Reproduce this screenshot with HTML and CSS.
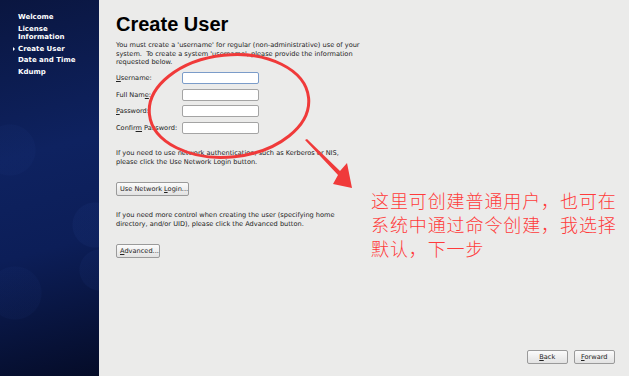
FILE: index.html
```html
<!DOCTYPE html>
<html lang="en">
<head>
    <meta charset="UTF-8">
    <title>Create User</title>
    <link rel="stylesheet" href="styles.css">
</head>
<body>

<div class="screen">
    <!-- Left: installer steps -->
    <aside class="sidebar">
        <ul class="steps">
            <li>Welcome</li>
            <li>License<br>Information</li>
            <li class="current">Create User</li>
            <li>Date and Time</li>
            <li>Kdump</li>
        </ul>
    </aside>

    <!-- Right: create user page -->
    <main class="content">
        <h1>Create User</h1>
        <p>You must create a 'username' for regular (non-administrative) use of your<br>system.&nbsp; To create a system 'username', please provide the information<br>requested below.</p>

        <div class="user-form">
            <label><u>U</u>sername:</label>
            <input type="text" class="focused">
            <label>Full Nam<u>e</u>:</label>
            <input type="text">
            <label><u>P</u>assword:</label>
            <input type="password">
            <label>Confir<u>m</u> Password:</label>
            <input type="password">
        </div>

        <p class="gap">If you need to use network authentication, such as Kerberos or NIS,<br>please click the Use Network Login button.</p>
        <button class="btn gap network">Use Network <u>L</u>ogin...</button>

        <p class="gap">If you need more control when creating the user (specifying home<br>directory, and/or UID), please click the Advanced button.</p>
        <button class="btn gap advanced"><u>A</u>dvanced...</button>

        <div class="nav">
            <button class="btn"><u>B</u>ack</button>
            <button class="btn"><u>F</u>orward</button>
        </div>
    </main>

    <!-- Annotation drawn over the screenshot -->
    <svg class="marks" width="629" height="376" viewBox="0 0 629 376">
        <ellipse cx="229" cy="106" rx="80" ry="51" transform="rotate(-6 229 106)" fill="none" stroke="#f03a3a" stroke-width="3"/>
        <polygon points="305,140 307,139 340,171 347,163 352,188 333,184 338,175" fill="#f03a3a"/>
    </svg>
    <div class="note">这里可创建普通用户，也可在<br>系统中通过命令创建，我选择<br>默认，下一步</div>
</div>

</body>
</html>
```

FILE: styles.css
```css
body {
    margin: 0;
    font-family: "DejaVu Sans", sans-serif;
}

.screen {
    position: relative;
    width: 629px;
    height: 376px;
    display: flex;
    overflow: hidden;
    background-color: #ebebea;
}

.sidebar {
    width: 99px;
    flex-shrink: 0;
    background:
        radial-gradient(circle at 95px 225px, rgba(40, 70, 150, 0.12) 0, rgba(40, 70, 150, 0.12) 22px, transparent 23px),
        radial-gradient(circle at 100px 270px, rgba(40, 70, 150, 0.1) 0, rgba(40, 70, 150, 0.1) 20px, transparent 21px),
        radial-gradient(circle at 15px 293px, rgba(40, 70, 150, 0.08) 0, rgba(40, 70, 150, 0.08) 26px, transparent 27px),
        radial-gradient(circle at 10px 150px, rgba(40, 70, 150, 0.08) 0, rgba(40, 70, 150, 0.08) 25px, transparent 26px),
        linear-gradient(165deg, #0a1640 0%, #0e2260 40%, #0c1e58 65%, #050c28 100%);
}

.steps {
    list-style: none;
    margin: 0;
    padding: 13px 0 0 18px;
    color: white;
    font-size: 7px;
    font-weight: bold;
    line-height: 8.5px;
}

.steps li {
    margin-bottom: 3px;
    position: relative;
}

.steps li.current::before {
    content: "";
    position: absolute;
    left: -5px;
    top: 2.5px;
    border-left: 2px solid white;
    border-top: 2px solid transparent;
    border-bottom: 2px solid transparent;
}

.content {
    flex: 1;
    display: flex;
    flex-direction: column;
    align-items: flex-start;
    padding: 12px 14px 12px 17px;
    color: #222;
    font-size: 6.6px;
}

h1 {
    margin: 0;
    font-family: "Liberation Sans", Arial, sans-serif;
    font-size: 20px;
    line-height: 24px;
    color: black;
}

p {
    margin: 5px 0 0;
    white-space: nowrap;
    line-height: 8.5px;
}

.user-form {
    display: grid;
    grid-template-columns: 66px 77px;
    row-gap: 4.5px;
    align-items: center;
    margin-top: 5.5px;
}

.user-form label {
    line-height: 12px;
}

.user-form input {
    box-sizing: border-box;
    height: 12px;
    width: 77px;
    margin: 0;
    border: 1px solid #a4a4a4;
    border-radius: 2px;
    background: white;
}

.user-form input.focused {
    border-color: #7b9cc9;
}

.gap {
    margin-top: 15.5px;
}

.btn {
    box-sizing: border-box;
    height: 14px;
    padding: 0 3px;
    white-space: nowrap;
    font-family: "DejaVu Sans", sans-serif;
    font-size: 6.6px;
    color: #222;
    background: linear-gradient(#fbfbfb, #e2e2e2);
    border: 1px solid #9a9a9a;
    border-radius: 2px;
}

.btn.network {
    width: 73px;
}

.btn.advanced {
    width: 44px;
}

.nav {
    margin-top: auto;
    align-self: flex-end;
    display: flex;
    gap: 5.5px;
}

.nav .btn {
    width: 41.5px;
}

.marks {
    position: absolute;
    top: 0;
    left: 0;
    pointer-events: none;
}

.note {
    position: absolute;
    left: 371px;
    top: 188px;
    white-space: nowrap;
    font-family: "Noto Sans CJK SC", sans-serif;
    font-size: 18px;
    font-weight: 300;
    line-height: 24px;
    letter-spacing: 0.9px;
    color: #ff3b3b;
}
```
